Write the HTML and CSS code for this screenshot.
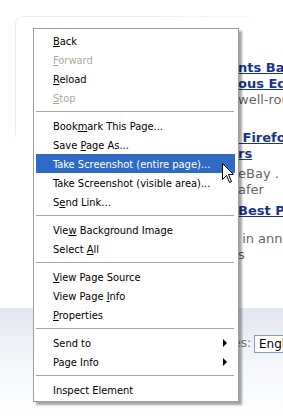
FILE: index.html
```html
<!DOCTYPE html>
<html>
<head>
<meta charset="utf-8">
<link rel="stylesheet" href="styles.css">
</head>
<body>
<div class="page">
  <div class="frame"></div>
  <div class="content">
    <div class="left-col"></div>
    <div class="news">
      <div class="story s1">
        <a class="title">nts Based on<br>ous Editors</a>
        <p class="desc">well-rounded</p>
      </div>
      <div class="story s2">
        <a class="title"> Firefox<br>rs</a>
        <p class="desc">eBay .<br>afer</p>
      </div>
      <div class="story s3">
        <a class="title">Best Practices</a>
        <p class="desc s3d"> in annual<br>s</p>
      </div>
    </div>
  </div>
  <div class="footer">
    <div class="lang-label">Languages:</div>
    <div class="lang-box">English</div>
  </div>

  <div class="menu">
    <div class="item"><span class="lbl"><u>B</u>ack</span></div>
    <div class="item disabled"><span class="lbl"><u>F</u>orward</span></div>
    <div class="item"><span class="lbl"><u>R</u>eload</span></div>
    <div class="item disabled"><span class="lbl"><u>S</u>top</span></div>
    <div class="sep"></div>
    <div class="item"><span class="lbl">Book<u>m</u>ark This Page...</span></div>
    <div class="item"><span class="lbl">Save <u>P</u>age As...</span></div>
    <div class="item active"><span class="lbl">Take Screenshot (entire page)...</span></div>
    <div class="item"><span class="lbl">Take Screenshot (visible area)...</span></div>
    <div class="item"><span class="lbl">S<u>e</u>nd Link...</span></div>
    <div class="sep"></div>
    <div class="item"><span class="lbl">Vie<u>w</u> Background Image</span></div>
    <div class="item"><span class="lbl">Select <u>A</u>ll</span></div>
    <div class="sep"></div>
    <div class="item"><span class="lbl"><u>V</u>iew Page Source</span></div>
    <div class="item"><span class="lbl">View Page <u>I</u>nfo</span></div>
    <div class="item"><span class="lbl"><u>P</u>roperties</span></div>
    <div class="sep"></div>
    <div class="item sub"><span class="lbl">Send to</span><span class="arrow"></span></div>
    <div class="item sub"><span class="lbl">Page Info</span><span class="arrow"></span></div>
    <div class="sep"></div>
    <div class="item"><span class="lbl">Inspect Element</span></div>
  </div>

  <svg class="cursor" width="13" height="21" viewBox="0 0 13 21">
    <path d="M0.5 0.5 L0.5 16.5 L4.5 12.5 L7.5 19.5 L9.5 18.5 L6.5 11.5 L11.5 11.5 Z" fill="#fff" stroke="#000" stroke-width="1" stroke-linejoin="miter"/>
  </svg>
</div>
</body>
</html>
```

FILE: styles.css
```css
html, body {
  margin: 0;
  padding: 0;
  background: #fff;
}
.page {
  position: relative;
  width: 283px;
  height: 418px;
  overflow: hidden;
  font-family: "DejaVu Sans", Verdana, sans-serif;
}
.frame {
  position: absolute;
  left: 15px;
  top: 16px;
  width: 240px;
  height: 120px;
  border-top: 1px solid #ebebeb;
  border-left: 1px solid #ebebeb;
  border-top-left-radius: 8px;
  -webkit-mask-image: linear-gradient(135deg, #000 30%, transparent 75%);
  mask-image: linear-gradient(135deg, #000 30%, transparent 75%);
}
.content {
  display: flex;
  height: 308px;
}
.left-col {
  width: 238px;
  flex: none;
}
.news {
  display: flex;
  flex-direction: column;
  padding-top: 60px;
  white-space: pre;
}
.story {
  display: flex;
  flex-direction: column;
}
.title {
  font-weight: bold;
  font-size: 13px;
  line-height: 16px;
  color: #17358a;
  text-decoration: underline;
}
.desc {
  margin: 0;
  font-size: 13px;
  line-height: 16px;
  color: #666;
}
.s1 { margin-bottom: 22px; }
.s2 .desc { margin-top: 4px; }
.s2 { margin-bottom: 5px; }
.s3d { margin-top: 12px; }
.footer {
  height: 110px;
  background: linear-gradient(#e3e8ef, #f4f6f9 50%, #fff);
  display: flex;
  align-items: flex-start;
  padding-top: 27px;
  box-sizing: border-box;
}
.lang-label {
  width: 254px;
  flex: none;
  text-align: right;
  padding-right: 3px;
  box-sizing: border-box;
  font-size: 12px;
  line-height: 16px;
  color: #777;
}
.lang-box {
  flex: none;
  width: 60px;
  height: 16px;
  border: 1px solid #7f9db9;
  background: #fff;
  font-size: 12px;
  line-height: 16px;
  padding-left: 4px;
  color: #000;
}

/* context menu */
.menu {
  position: absolute;
  left: 33px;
  top: 28px;
  width: 199px;
  padding: 2px 3px 2px 2px;
  border: 1px solid #9d9d9d;
  background: #fff;
  box-shadow: 3px 3px 2px rgba(0,0,0,0.35);
  font-family: "DejaVu Sans Condensed", "DejaVu Sans", sans-serif;
  font-size: 11px;
  color: #000;
}
.item {
  height: 19px;
  box-sizing: border-box;
  padding-top: 1px;
  display: flex;
  align-items: center;
  padding-left: 17px;
  padding-right: 8px;
  white-space: nowrap;
}
.item .lbl { flex: 1; }
.item.disabled { color: #aca899; }
.item.active {
  background: #316ac5;
  color: #fff;
}
.sep {
  height: 1px;
  margin: 4px 1px 4px 0;
  background: #a5a5a5;
}
.arrow {
  width: 0;
  height: 0;
  border-top: 4px solid transparent;
  border-bottom: 4px solid transparent;
  border-left: 4px solid #000;
}
.cursor {
  position: absolute;
  left: 222px;
  top: 163px;
}
```
